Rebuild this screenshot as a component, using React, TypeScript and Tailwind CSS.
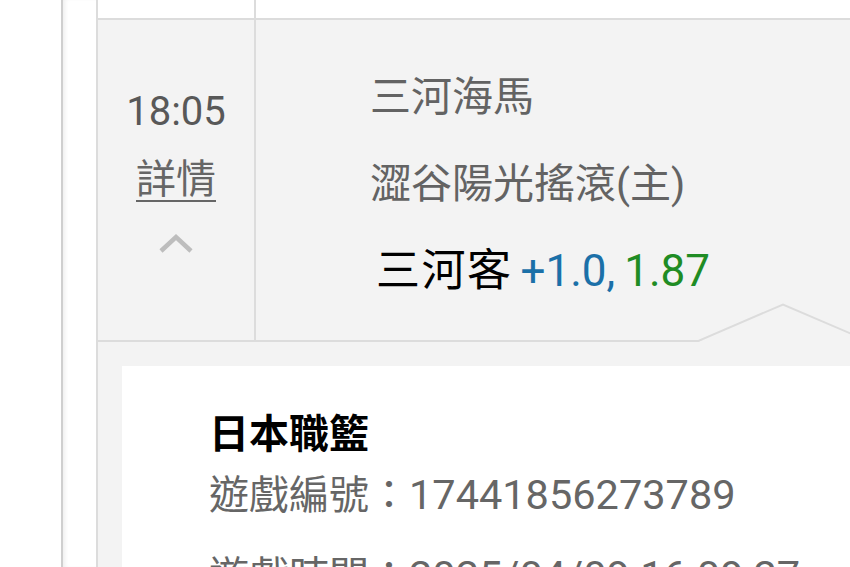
export default function App() {
  return (
    <div className="w-[850px] h-[567px] overflow-hidden bg-white flex font-['Roboto','Noto_Sans_CJK_TC',sans-serif]">
      {/* page gutter + side rail */}
      <div className="w-[61px] shrink-0 bg-white" />
      <div className="w-[35px] shrink-0 border-l-2 border-[#cfcfcf] bg-white shadow-[inset_4px_0_4px_-2px_rgba(0,0,0,0.07)]" />

      {/* table */}
      <div className="flex-1 min-w-0 border-l-2 border-[#dcdcdc]">
        {/* previous row (cut off) */}
        <div className="flex h-[20px] border-b-2 border-[#dcdcdc] bg-white">
          <div className="w-[158px] shrink-0 border-r-2 border-[#dcdcdc]" />
          <div className="flex-1" />
        </div>

        {/* match row */}
        <div className="relative flex h-[322px] bg-[#f3f3f3] border-b-2 border-[#dcdcdc]">
          <div className="w-[158px] shrink-0 border-r-2 border-[#dcdcdc] flex flex-col items-center pt-[68px]">
            <span className="text-[40px] leading-[47px] text-[#585858]">18:05</span>
            <a className="mt-[22px] text-[40px] leading-[46px] text-[#666] underline decoration-2 underline-offset-[7px] cursor-pointer">
              詳情
            </a>
            <svg className="mt-[29px]" width="36" height="22" viewBox="0 0 36 22" fill="none">
              <polyline points="3,19 18,5 33,19" stroke="#bdbdbd" strokeWidth="4.5" />
            </svg>
          </div>

          <div className="flex-1 flex flex-col pl-[114px] pt-[34px] text-[41px] leading-[87px] text-[#636363]">
            <span>三河海馬</span>
            <span>澀谷陽光搖滾(主)</span>
            <span className="pl-[6px] text-[44px] text-black">
              <span className="tracking-[1.5px]">三河客</span>
              <span className="ml-[8px] text-[#1b70a8]">+1.0,</span>
              <span className="ml-[9px] text-[#1f8c24]">1.87</span>
            </span>
          </div>

          {/* pointer into the detail panel */}
          <svg
            className="absolute left-[600px] bottom-[-2px]"
            width="170"
            height="39"
            viewBox="0 0 170 39"
            fill="none"
          >
            <polygon points="0,39 85,1.5 170,39" fill="#f3f3f3" />
            <polyline points="0,38 85,1.5 170,38" stroke="#dcdcdc" strokeWidth="2" />
          </svg>
        </div>

        {/* detail panel */}
        <div className="bg-[#f3f3f3] pt-[24px] pl-[24px] h-[300px]">
          <div className="bg-white h-full pl-[87px] pt-[39px]">
            <div className="text-[40px] leading-[60px] font-bold text-black">日本職籃</div>
            <div className="text-[40px] leading-[60px] text-[#666] whitespace-nowrap">
              遊戲編號：<span className="text-[41.5px]">17441856273789</span>
            </div>
            <div className="mt-[20px] text-[40px] leading-[60px] text-[#666] whitespace-nowrap">
              遊戲時間：<span className="text-[41.5px]">2025/04/09 16:09:27</span>
            </div>
          </div>
        </div>
      </div>
    </div>
  );
}
